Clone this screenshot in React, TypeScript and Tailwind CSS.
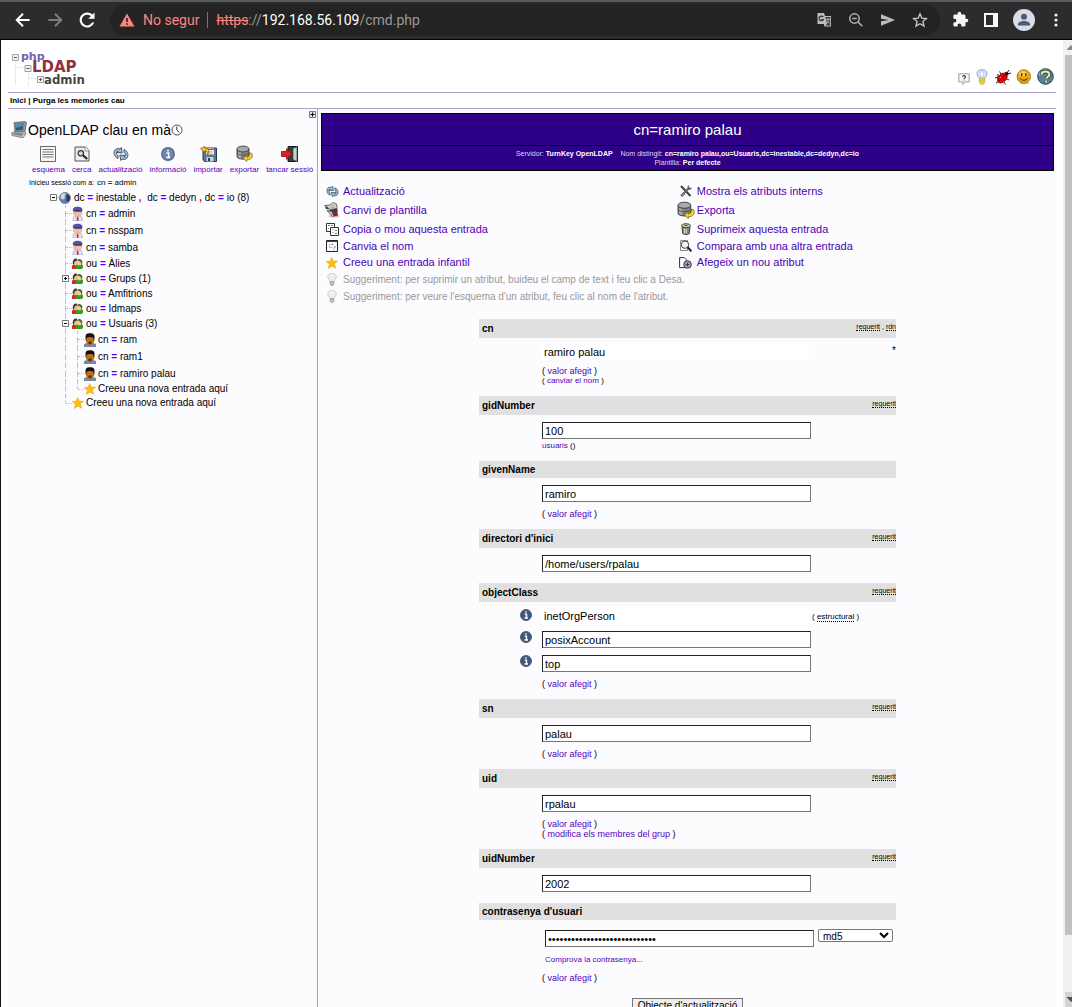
import React, { useState } from "react";

type IconProps = { className?: string };

/* ---------- browser bar icons ---------- */

const BackIcon = () => (
  <svg viewBox="0 0 24 24" className="size-5 text-white" fill="none" stroke="currentColor" strokeWidth="2.4">
    <path d="M20 12H4.5M12 4.500L4.500 12l7.500 7.500" />
  </svg>
);
const ForwardIcon = () => (
  <svg viewBox="0 0 24 24" className="size-5 text-[#7d7d7d]" fill="none" stroke="currentColor" strokeWidth="2.4">
    <path d="M4 12h15.500M12 4.500l7.500 7.500-7.500 7.500" />
  </svg>
);
const ReloadIcon = () => (
  <svg viewBox="0 0 24 24" className="size-5 text-white" fill="currentColor">
    <path d="M18.500 5.500A9 9 0 1 0 20.700 15h-2.800a6.400 6.400 0 1 1-1.300-7.600L13.500 10.500H21V3z" />
  </svg>
);
const WarningIcon = () => (
  <svg viewBox="0 0 16 14" className="h-[14px] w-4">
    <path d="M8 0.500L15.500 13.500H0.500z" fill="#ff8380" />
    <path d="M7.200 5h1.600v4H7.200zM7.200 10.200h1.600v1.600H7.200z" fill="#232323" />
  </svg>
);
const TranslateIcon = () => (
  <svg viewBox="0 0 16 16" className="size-4">
    <path d="M1.500 1H8l1 3h6v10.500H8.500L7.700 12H1.500z" fill="#bdbdbd" />
    <path d="M9.300 5h4.900v8.600H9.200L11 12z" fill="#3a3a3a" />
    <path d="M7.300 5.200A2.300 2.300 0 1 0 7.400 7.500H5.300" fill="none" stroke="#2b2b2b" strokeWidth="1.100" />
    <path d="M9.800 7.300h4M11.800 6.300v1M13 7.500c-.4 1.800-1.500 3-2.600 3.900M10.700 8.800c.6 1.200 1.600 2 2.700 2.500" fill="none" stroke="#cfcfcf" strokeWidth=".8" />
  </svg>
);
const ZoomOutIcon = () => (
  <svg viewBox="0 0 16 16" className="size-4" fill="none" stroke="#b5b5b5" strokeWidth="1.500">
    <circle cx="6.500" cy="6.500" r="4.700" />
    <path d="M4.300 6.500h4.400M10 10l4.300 4.300" />
  </svg>
);
const SendIcon = () => (
  <svg viewBox="0 0 16 16" className="size-4">
    <path d="M1 2.200L15 8 1 13.800V9.300L9 8 1 6.700z" fill="#bdbdbd" />
  </svg>
);
const StarOutlineIcon = () => (
  <svg viewBox="0 0 16 16" className="size-4">
    <path d="M8 1.800l1.800 4.300 4.600.4-3.500 3 1.100 4.600L8 11.700l-4 2.400 1.100-4.600-3.500-3 4.600-.4z" fill="none" stroke="#c8c8c8" strokeWidth="1.300" />
  </svg>
);
const PuzzleIcon = () => (
  <svg viewBox="0 0 24 24" className="size-[17px]">
    <path d="M20.500 11H19V7a2 2 0 0 0-2-2h-4V3.500a2.500 2.500 0 0 0-5 0V5H4a2 2 0 0 0-2 2v3.800h1.500a2.700 2.700 0 0 1 0 5.400H2V20a2 2 0 0 0 2 2h3.800v-1.500a2.700 2.700 0 0 1 5.400 0V22H17a2 2 0 0 0 2-2v-4h1.500a2.500 2.500 0 0 0 0-5z" fill="#f7f7f7" />
  </svg>
);
const SidePanelIcon = () => (
  <svg viewBox="0 0 14 14" className="size-[14px]">
    <path d="M0 0h14v14H0zM2 2v10h7V2z" fill="#f7f7f7" fillRule="evenodd" />
  </svg>
);
const AvatarIcon = () => (
  <svg viewBox="0 0 22 22" className="size-[22px]">
    <circle cx="11" cy="11" r="11" fill="#dadce6" />
    <circle cx="11" cy="7.700" r="3" fill="#4d5a78" />
    <path d="M5 16.500v-1.300c0-2.200 3.600-3.200 6-3.200s6 1 6 3.200v1.300z" fill="#4d5a78" />
  </svg>
);
const MenuDotsIcon = () => (
  <svg viewBox="0 0 4 14" className="h-[14px] w-1" fill="#f2f2f2">
    <circle cx="2" cy="2" r="1.600" />
    <circle cx="2" cy="7" r="1.600" />
    <circle cx="2" cy="12" r="1.600" />
  </svg>
);

/* ---------- page icons ---------- */

const HintBubbleIcon = () => (
  <svg viewBox="0 0 12 12" className="size-3">
    <path d="M.8.800h10.400v8H7L5 11.500 4.700 8.800H.8z" fill="#fafafa" stroke="#9a9a9a" />
    <path d="M4.600 3.700c0-1.500 2.900-1.500 2.900.1 0 .9-1.400.9-1.400 1.900M6.100 6.500v1" fill="none" stroke="#333" strokeWidth="1.100" />
  </svg>
);
const LampIcon = () => (
  <svg viewBox="0 0 12 16" className="h-4 w-3">
    <path d="M3.500 10C3.200 8 1 7 1 4.500 1 2 3 .7 6 .7s5 1.300 5 3.800C11 7 8.800 8 8.500 10z" fill="#dfe6fb" stroke="#8c9ddd" />
    <path d="M4 3.500c1-1 3-1 4 0L7.200 8H4.800z" fill="#fff" stroke="#9ca8d8" strokeWidth=".6" />
    <path d="M3.300 9.300h5.400v4.200L7.500 15.300h-3l-1.200-1.800z" fill="#f1e04a" stroke="#a79a3a" strokeWidth=".6" />
    <path d="M3.500 11h5M3.500 12.800h5" stroke="#b6a53a" strokeWidth=".6" />
  </svg>
);
const BugIcon = () => (
  <svg viewBox="0 0 16 16" className="size-4">
    <path d="M0 9l3-1M1 14l3.500-2M9 13l1.500 2.500M11 9.500l3 1.500M6 5L4.500 2.500M12 4l2-3M13 5l3-1M3 8V5" stroke="#222" strokeWidth="1" />
    <ellipse cx="7.300" cy="9" rx="5.800" ry="4" transform="rotate(-45 7.300 9)" fill="#e0060f" stroke="#700" strokeWidth=".7" />
    <path d="M3.600 12.500L10 6" stroke="#500" strokeWidth=".8" />
    <circle cx="11.700" cy="4.600" r="1.800" fill="#3b090b" />
    <circle cx="5.500" cy="8.500" r=".8" fill="#ff8a7c" />
    <circle cx="8.800" cy="10" r=".7" fill="#400" />
  </svg>
);
const SmileIcon = () => (
  <svg viewBox="0 0 16 16" className="size-4">
    <ellipse cx="8.500" cy="14" rx="5" ry="1.200" fill="#ccc" />
    <circle cx="7.800" cy="7.500" r="6.700" fill="#e7a912" stroke="#8f6205" strokeWidth=".8" />
    <ellipse cx="7" cy="4.500" rx="4" ry="2.500" fill="#f8d04d" />
    <path d="M5.700 4v3M9.800 4v3" stroke="#3a2600" strokeWidth="1.200" />
    <path d="M4 9.200c1.200 2.700 6.400 2.700 7.600 0" fill="none" stroke="#3a2600" strokeWidth="1" />
  </svg>
);
const HelpIcon = () => (
  <svg viewBox="0 0 17 17" className="size-[17px]">
    <circle cx="8.500" cy="8.500" r="7.800" fill="#56809b" stroke="#24465e" />
    <path d="M2 8a6.500 6.500 0 0 1 12-3.500C9 3 5 5 2 8z" fill="#a9c7d6" />
    <path d="M4.700 6.500c0-4.200 8-4 7.600.3-.2 2-2.900 2-2.900 4M9.300 12.500v2.300" fill="none" stroke="#2e3a20" strokeWidth="3.400" />
    <path d="M4.700 6.500c0-4.200 8-4 7.600.3-.2 2-2.900 2-2.900 4M9.300 12.500v2.300" fill="none" stroke="#f1edad" strokeWidth="2" />
  </svg>
);
const ComputerIcon = () => (
  <svg viewBox="0 0 16 18" className="h-[18px] w-4">
    <path d="M3 1.500L14 .5l1.500 1-1.500 9L4 11z" fill="#8d9499" stroke="#555c61" strokeWidth=".7" />
    <path d="M4.700 2.800l8-.8-1 7-7 .5z" fill="#2d5d80" />
    <path d="M4.700 2.800l8-.8-.4 2.800L4.800 7z" fill="#5c8db0" />
    <path d="M.6 12L4 10.500l10 .3 1 2-3 4L1 14.500z" fill="#b9bec0" stroke="#60666a" strokeWidth=".7" />
    <path d="M2 12.700l9 1.700M4 11.700l8 1.200" stroke="#555" strokeWidth=".7" />
  </svg>
);
const ClockIcon = () => (
  <svg viewBox="0 0 12 12" className="size-3">
    <circle cx="6" cy="6" r="5" fill="#fff" stroke="#555" />
    <path d="M5.800 2.500V6l2.500 2.300" fill="none" stroke="#333" />
  </svg>
);
const SchemaIcon = () => (
  <svg viewBox="0 0 16 16" className="size-4">
    <path d="M.5.500h15v15H.5z" fill="#f6f6f4" stroke="#666" />
    <path d="M2.500 3.500h11M2.500 6h11M2.500 8.500h11M2.500 11h11" stroke="#6d7675" strokeWidth="1.200" />
  </svg>
);
const SearchDocIcon = () => (
  <svg viewBox="0 0 16 16" className="size-4">
    <path d="M1 1h10.500L15 4.500V15H1z" fill="#eeeeec" stroke="#555" />
    <path d="M11 1v4h4" fill="#fff" stroke="#777" strokeWidth=".8" />
    <path d="M8.700 9l4.500 4" stroke="#222" strokeWidth="2.200" />
    <circle cx="6.800" cy="7.300" r="2.700" fill="#cfdcdf" stroke="#333" strokeWidth="1.200" />
  </svg>
);
const RefreshIcon = ({ className = "size-4" }: IconProps) => (
  <svg viewBox="0 0 16 16" className={className}>
    <path d="M5 12.500C1.500 11 .8 8 1.300 5.500 2 3 4.500 2 7 3l1.200-1.500 1 5.500-5.200-.6 1.300-1.300c-2-.2-2.300 3-.3 4.700z" fill="#a9c0d6" stroke="#2f4458" strokeWidth=".9" />
    <path d="M11 3.500c3.500 1.500 4.200 4.500 3.700 7-.7 2.500-3.200 3.500-5.700 2.500l-1.200 1.500-1-5.500 5.200.6-1.300 1.300c2 .2 2.300-3 .3-4.700z" fill="#a9c0d6" stroke="#2f4458" strokeWidth=".9" />
  </svg>
);
const InfoIcon = ({ className = "size-[14px]" }: IconProps) => (
  <svg viewBox="0 0 14 14" className={className}>
    <circle cx="7" cy="7" r="6.300" fill="#6c87b4" stroke="#56647a" strokeWidth="1.200" />
    <path d="M7 2.700v1.800M5.500 6H7.700v4M5.300 10.400h3.900" stroke="#fff" strokeWidth="1.500" fill="none" />
  </svg>
);
const DarkInfoIcon = () => (
  <svg viewBox="0 0 12 12" className="size-3">
    <circle cx="6" cy="6" r="5.500" fill="#3c5682" stroke="#59636f" />
    <path d="M6 2.300v1.500M4.700 5.200h1.800v3.300M4.500 9h3.500" stroke="#fff" strokeWidth="1.400" fill="none" />
  </svg>
);
const ImportIcon = () => (
  <svg viewBox="0 0 17 16" className="h-4 w-[17px]">
    <path d="M3 2h13.500v13.500H4.500L3 14z" fill="#5d7694" stroke="#293b50" />
    <path d="M6 2h8v6.500H6z" fill="#f4f2ef" />
    <path d="M6 3.200h8" stroke="#cf4f44" strokeWidth="1.600" />
    <path d="M7.500 5.300h5M7.500 7h5" stroke="#999" strokeWidth=".7" />
    <path d="M6.500 11h7v4.500h-7z" fill="#cbd3d8" />
    <path d="M8 12h2v3H8z" fill="#293b50" />
    <path d="M.5 2.500L4.500.5 4.700 2c4 .2 5 3.500 2.800 6.800.2-2.800-.8-4-2.800-4L5 7z" fill="#f6c93d" stroke="#7c5b05" strokeWidth=".7" />
  </svg>
);
const ExportIcon = ({ className = "size-[17px]" }: IconProps) => (
  <svg viewBox="0 0 17 17" className={className}>
    <path d="M1 4v7.500c0 3.500 12 3.500 12 0V4z" fill="#7c7f7d" stroke="#3d3f3e" strokeWidth=".9" />
    <path d="M2 6.500v5.500c1 1 2 1.300 3 1.500V7.500z" fill="#a5a8a6" />
    <ellipse cx="7" cy="4" rx="6" ry="2.900" fill="#a9acaa" stroke="#3d3f3e" strokeWidth=".9" />
    <path d="M1 8c1 2.800 11 2.800 12 0" fill="none" stroke="#3d3f3e" strokeWidth=".6" />
    <path d="M13.500 7.500l2.500 1.200c1.200 3.300-1 6.300-5 6l-.3 1.800L7 13.200l3.800-2.700.2 1.700c2-.2 2.800-1.700 2.500-4.700z" fill="#f6d13d" stroke="#7c5b05" strokeWidth=".7" />
  </svg>
);
const LogoutIcon = () => (
  <svg viewBox="0 0 17 16" className="h-4 w-[17px]">
    <path d="M7 .5h9.500v15H7z" fill="#31423f" stroke="#161e1c" />
    <path d="M12 2.500l4-1.700v14.700l-4-2z" fill="#c9cfcb" stroke="#39413e" strokeWidth=".6" />
    <path d="M.5 5.500h5V2.700L11 8l-5.500 5.300v-2.800h-5z" fill="#e32020" stroke="#7a0c0c" strokeWidth=".8" />
  </svg>
);
const GlobeIcon = () => (
  <svg viewBox="0 0 12 12" className="size-3">
    <circle cx="6" cy="6" r="5.500" fill="#607fae" stroke="#687080" strokeWidth=".8" />
    <path d="M2 3C4 .7 6 1 7 1.800L5.500 4 6 6 4 7.800 1.500 6z" fill="#cfd9e4" />
    <path d="M7.500 2.500c2.500 0 3.500 2 3.300 4.500L9 10 7.500 8.500z" fill="#26364f" />
  </svg>
);
const AdminIcon = () => (
  <svg viewBox="0 0 11 15" className="h-[15px] w-[11px]">
    <path d="M.8 15L1.500 11 4.500 9.500h2.300L9.800 11l.6 4z" fill="#e2e4f0" stroke="#9a9db3" strokeWidth=".6" />
    <path d="M5.600 10l1.100 2-.5 3H5l-.5-3z" fill="#d83248" />
    <ellipse cx="5.600" cy="6.500" rx="4.200" ry="3.800" fill="#f2bda6" stroke="#b98777" strokeWidth=".4" />
    <path d="M.9 5C.2 2 2.500.800 5.600.8s5.400 1.200 4.800 3.700L9 5.200H3z" fill="#5a539c" />
    <path d="M2.500 5h7.500" stroke="#2c2564" strokeWidth="1.200" />
  </svg>
);
const GroupIcon = () => (
  <svg viewBox="0 0 12 12" className="size-[11px]">
    <path d="M0 12V8.500l2-2h3l1.500 3V12z" fill="#d92918" />
    <path d="M4 12V8.500l2-2.500h3.500L12 8v2l-1 2z" fill="#3c9a21" />
    <ellipse cx="3.800" cy="5" rx="2.600" ry="3" fill="#e2c0a2" />
    <path d="M.8 6C.5 2 3-.2 5.500 1L5 3 3 3.500 2 7z" fill="#333b2e" />
    <ellipse cx="8" cy="4.800" rx="2.700" ry="3.200" fill="#ead38b" />
    <path d="M5.200 3C6 .5 10.500 0 11.300 4l-.5 4-1.300-3.500-2-1.500z" fill="#5b6336" />
  </svg>
);
const UserIcon = () => (
  <svg viewBox="0 0 12 14" className="h-[14px] w-3">
    <path d="M0 14v-3l3-1h6l3 1v3z" fill="#6f8bb0" />
    <rect x="1.500" y=".3" width="9" height="9" rx="3.500" fill="#17120e" />
    <path d="M2.400 5c2-1.200 5.200-1.200 7.200 0v4.500L7.500 12h-3L2.400 9.500z" fill="#c4700f" />
    <path d="M4.300 9c1-1 2.400-1 3.400 0v1.500L6 11.500 4.300 10.500z" fill="#5a330c" />
  </svg>
);
const GoldStarIcon = () => (
  <svg viewBox="0 0 12 12" className="size-3">
    <path d="M5.700.3l1.700 3.600 4.300.2-3.300 2.800 1.500 4.500-4-2.200-3.600 2.500.9-4.500L0 4.500l4-.4z" fill="#fdbd10" stroke="#e9a300" strokeWidth=".4" />
  </svg>
);
const TemplateIcon = () => (
  <svg viewBox="0 0 16 16" className="size-4">
    <ellipse cx="10" cy="14.300" rx="5.500" ry="1.300" fill="#c4c4c4" />
    <path d="M.5 3.500L6 3 9 .5l3.500 1.500.7 4.500L6 7.500 4 5.500z" fill="#dcdcd8" stroke="#4e4e4a" strokeWidth=".8" />
    <path d="M1 4.500L4 5.500l1.500 2L2 7zM5 8l8-1.500 1 3-6 2z" fill="#3b3b3b" />
    <path d="M3 8.500l5 1 2.500 4-2 1z" fill="#c9c9c4" stroke="#444" strokeWidth=".8" />
    <path d="M8 11l5-2 1.200 4.500-4.200 1z" fill="#951a2e" />
    <path d="M6 4.500l5-1.500M6.500 6l5-1" stroke="#8a8a8a" strokeWidth=".7" />
  </svg>
);
const CopyIcon = () => (
  <svg viewBox="0 0 13 13" className="size-[13px]">
    <path d="M.5.500h8v8h-8z" fill="#fff" stroke="#333" />
    <path d="M4.500 4.500h8v8h-8z" fill="#fff" stroke="#333" />
    <path d="M2 2.500h2M5 2.500h2M2 5.500h1M6.500 6.500h1M9 7.500h2M6.500 9.500h1M9 10.500h2" stroke="#777" />
  </svg>
);
const RenameIcon = () => (
  <svg viewBox="0 0 12 12" className="size-3">
    <path d="M.5.500h11v11H.5z" fill="#fafafa" stroke="#223" />
    <path d="M1 1.500h10" stroke="#2c5268" />
    <path d="M3.500 4v3.500h3M7 9h2" fill="none" stroke="#aaa" strokeWidth=".8" />
    <path d="M5.500 4.500h1.500" stroke="#b83d34" />
    <path d="M8 7h1.500" stroke="#27744d" />
  </svg>
);
const BulbIcon = () => (
  <svg viewBox="0 0 10 13" className="h-[13px] w-[10px]">
    <path d="M3 8.500C2.800 7 .8 6 .8 3.800.8 1.800 2.700.5 5 .5s4.200 1.300 4.200 3.300C9.200 6 7.200 7 7 8.500z" fill="#eee" stroke="#c8c8c8" />
    <path d="M3.500 3c.4-.8 1.200-1.200 2-1" stroke="#fff" fill="none" strokeWidth="1.300" />
    <path d="M3.200 8.500h3.600v2.800L5.700 12.500H4.300l-1.100-1.200z" fill="#c1c1aa" stroke="#8b8b80" strokeWidth=".6" />
  </svg>
);
const ToolsIcon = () => (
  <svg viewBox="0 0 12 12" className="size-3">
    <path d="M1 1l9.500 10" stroke="#3d3d3d" strokeWidth="2" />
    <path d="M9.500 2.500L3 9" stroke="#5c6670" strokeWidth="2" />
    <path d="M8.500.700L8 3l1.500 1.200L11.500 3" stroke="#4a5158" strokeWidth="1.200" fill="none" />
    <path d="M3.500 7.500L.8 10l1 1.500L5 9z" stroke="#4a6178" fill="#8aa2b8" />
  </svg>
);
const TrashIcon = () => (
  <svg viewBox="0 0 10 12" className="h-3 w-[10px]">
    <path d="M1 3.500h8l-.7 7c-1 1.200-5.600 1.200-6.600 0z" fill="#858b75" stroke="#33372c" strokeWidth=".9" />
    <path d="M3.500 5.500v5M5.300 5.500v5" stroke="#dfe4d0" strokeWidth=".9" />
    <ellipse cx="5" cy="2.700" rx="4.500" ry="2" fill="#c7ccb8" stroke="#33372c" strokeWidth=".9" />
    <path d="M3.500 2.400h3" stroke="#33372c" strokeWidth=".9" />
  </svg>
);
const CompareIcon = () => (
  <svg viewBox="0 0 12 12" className="size-3">
    <path d="M.6.600h6.900v9.900H.6z" fill="#fff" stroke="#777" strokeWidth=".9" />
    <circle cx="5" cy="4.700" r="3.700" fill="#eef3f5" stroke="#444" />
    <path d="M7.500 7l3.800 4.300" stroke="#222" strokeWidth="2" />
  </svg>
);
const AddAttrIcon = () => (
  <svg viewBox="0 0 13 12" className="h-3 w-[13px]">
    <path d="M.6.600h4.700l2 2v8H.6z" fill="#fff" stroke="#333" />
    <circle cx="8.500" cy="7.500" r="3.800" fill="#a79abf" stroke="#3d3350" />
    <path d="M8.500 5.700v3.600M6.700 7.500h3.600" stroke="#3d3350" />
  </svg>
);
const Logo = () => (
  <svg viewBox="0 0 78 37" className="h-[37px] w-[78px]" role="img" aria-label="phpLDAPadmin">
    <path d="M4.500 12v24M17.500 21v15M5 17.500h8M18 28.500h7" stroke="#d4d4d4" strokeDasharray="1 1" fill="none" />
    <path d="M1.500 4.500h6v6h-6zM14 15.500h6v6h-6zM26.500 26.500h6v6h-6z" fill="#f3f3f3" stroke="#999" strokeWidth=".9" />
    <path d="M3 7.500h3M15.500 18.500h3M28 29.500h3M29.500 28v3" stroke="#555" />
    <text x="10" y="10" fontFamily="'DejaVu Sans'" fontWeight="700" fontSize="11" fill="#7463ae">php</text>
    <text x="21" y="22" fontFamily="'DejaVu Sans'" fontWeight="700" fontSize="15" fill="#92303f">LDAP</text>
    <text x="33" y="34" fontFamily="'DejaVu Sans Condensed', 'DejaVu Sans'" fontWeight="700" fontSize="13" fill="#444">admin</text>
  </svg>
);

/* ---------- building blocks ---------- */

const BrowserBar = () => (
  <header className="flex h-10 shrink-0 items-center border-t-2 border-b border-t-[#58595a] border-b-black bg-[#2c2c2c] pr-3 pb-[2px] pl-[13px] font-[Roboto,sans-serif] text-sm">
    <div className="flex items-center gap-3 pr-[13px]">
      <button aria-label="Enrere"><BackIcon /></button>
      <button aria-label="Endavant"><ForwardIcon /></button>
      <button aria-label="Torna a carregar"><ReloadIcon /></button>
    </div>
    <div className="flex h-8 flex-1 items-center rounded-full bg-[#232323] pr-3 pl-[9px]">
      <WarningIcon />
      <span className="ml-2 text-[#ff8380]">No segur</span>
      <span className="mx-2 h-4 w-px bg-[#777]" />
      <span className="flex-1 text-[#9a9a9a]">
        <s className="text-[#ff8380]">https</s>://<span className="text-white">192.168.56.109</span>/cmd.php
      </span>
      <div className="flex items-center gap-4">
        <button aria-label="Tradueix"><TranslateIcon /></button>
        <button aria-label="Zoom"><ZoomOutIcon /></button>
        <button aria-label="Comparteix"><SendIcon /></button>
        <button aria-label="Preferit"><StarOutlineIcon /></button>
      </div>
    </div>
    <div className="flex items-center gap-[15px] pl-3">
      <button aria-label="Extensions"><PuzzleIcon /></button>
      <button aria-label="Tauler lateral"><SidePanelIcon /></button>
      <button aria-label="Perfil"><AvatarIcon /></button>
      <button aria-label="Menú" className="pr-[2px] pl-1"><MenuDotsIcon /></button>
    </div>
  </header>
);

const tools = [
  { label: "esquema", icon: <SchemaIcon /> },
  { label: "cerca", icon: <SearchDocIcon /> },
  { label: "actualització", icon: <RefreshIcon /> },
  { label: "informació", icon: <InfoIcon /> },
  { label: "importar", icon: <ImportIcon /> },
  { label: "exportar", icon: <ExportIcon /> },
  { label: "tancar sessió", icon: <LogoutIcon /> },
];

const Toggle = ({ open }: { open: boolean }) => (
  <button aria-label={open ? "Contrau" : "Expandeix"} className="block size-[7px] bg-white">
    <svg viewBox="0 0 7 7" className="size-[7px]">
      <path d="M.5.500h6v6h-6z" fill="#fff" stroke="#777" />
      <path d={open ? "M2 3.500h3" : "M2 3.500h3M3.500 2v3"} stroke="#000" />
    </svg>
  </button>
);

const Guide = ({ kind, toggle }: { kind: "pass" | "branch" | "last"; toggle?: "open" | "closed" }) => (
  <span className="flex w-3 shrink-0 self-stretch">
    <span className="flex w-[6px] flex-col">
      <span className="flex-1 border-r border-dashed border-[#c0c0c0]" />
      <span className={kind === "last" ? "flex-1" : "flex-1 border-r border-dashed border-[#c0c0c0]"} />
    </span>
    {kind !== "pass" && (
      <span className="relative flex w-[6px] items-center">
        <span className="w-full border-t border-dotted border-[#c0c0c0]" />
        {toggle && (
          <span className="absolute -left-1">
            <Toggle open={toggle === "open"} />
          </span>
        )}
      </span>
    )}
  </span>
);

const Rdn = ({ attr, value }: { attr: string; value: string }) => (
  <>
    {attr} <b className="text-[#5500ff]">=</b> {value}
  </>
);

type Node = {
  level: 1 | 2;
  kind: "admin" | "group" | "user" | "new";
  name?: string;
  toggle?: "open" | "closed";
  last?: boolean;
};

const nodes: Node[] = [
  { level: 1, kind: "admin", name: "admin" },
  { level: 1, kind: "admin", name: "nsspam" },
  { level: 1, kind: "admin", name: "samba" },
  { level: 1, kind: "group", name: "Àlies" },
  { level: 1, kind: "group", name: "Grups (1)", toggle: "closed" },
  { level: 1, kind: "group", name: "Amfitrions" },
  { level: 1, kind: "group", name: "Idmaps" },
  { level: 1, kind: "group", name: "Usuaris (3)", toggle: "open" },
  { level: 2, kind: "user", name: "ram" },
  { level: 2, kind: "user", name: "ram1" },
  { level: 2, kind: "user", name: "ramiro palau" },
  { level: 2, kind: "new", last: true },
  { level: 1, kind: "new", last: true },
];

const rowHeight = { admin: "h-[17px]", group: "h-[15px]", user: "h-[17px]", new: "h-[14px]" };
const rowIcon = { admin: <AdminIcon />, group: <GroupIcon />, user: <UserIcon />, new: <GoldStarIcon /> };

const TreeRow = ({ node }: { node: Node }) => (
  <li className={`flex items-center ${rowHeight[node.kind]}`}>
    {node.level === 2 && <Guide kind="pass" />}
    <Guide kind={node.last ? "last" : "branch"} toggle={node.toggle} />
    <a href="#" className="flex items-center">
      <span className="w-[14px] shrink-0">{rowIcon[node.kind]}</span>
      <span>
        {node.kind === "new" ? (
          "Creeu una nova entrada aquí"
        ) : (
          <Rdn attr={node.kind === "group" ? "ou" : "cn"} value={node.name ?? ""} />
        )}
      </span>
    </a>
  </li>
);

const Sidebar = () => (
  <aside className="w-[310px] shrink-0 border-r border-[#a6a3d0]">
    <div className="flex justify-end pt-[2px] pr-px">
      <button aria-label="Amplia" className="size-[7px]">
        <svg viewBox="0 0 7 7" className="size-[7px]">
          <path d="M.5.500h6v6h-6z" fill="#d8e6ea" stroke="#778" />
          <path d="M1.500 3.500h4M3.500 1.500v4" stroke="#000" />
        </svg>
      </button>
    </div>
    <h1 className="flex h-6 items-center pl-[3px] text-[14px]">
      <ComputerIcon />
      <span className="ml-px">OpenLDAP clau en mà</span>
      <ClockIcon />
    </h1>
    <nav className="mt-[3px] flex gap-[7px] pl-6">
      {tools.map((tool) => (
        <a key={tool.label} href="#" className="flex flex-col items-center text-[8px] leading-4 whitespace-nowrap text-[#5500bb]">
          <span className="flex h-[17px] items-center">{tool.icon}</span>
          {tool.label}
        </a>
      ))}
    </nav>
    <p className="flex items-baseline gap-[3px] pl-[21px] text-[8px] leading-[10px]">
      <span className="text-[7px]">Inicieu sessió com a:</span>
      <a href="#"><Rdn attr="cn" value="admin" /></a>
    </p>
    <div className="pt-[2px] pl-[42px] text-[10px] leading-[14px]">
      <div className="flex h-[15px] items-center">
        <Toggle open />
        <span className="w-[2px] border-t border-dashed border-[#c0c0c0]" />
        <GlobeIcon />
        <a href="#" className="ml-[3px]">
          <Rdn attr="dc" value="inestable" /> <b className="text-[#e00030]">,</b>&nbsp; <Rdn attr="dc" value="dedyn" />{" "}
          <b className="text-[#e00030]">,</b>&nbsp;<Rdn attr="dc" value="io (8)" />
        </a>
      </div>
      <ul className="pl-[10px]">
        {nodes.map((node, i) => (
          <TreeRow key={i} node={node} />
        ))}
      </ul>
    </div>
  </aside>
);

const actionRows = [
  { height: "h-[18px]", left: ["Actualització", <RefreshIcon className="size-[13px]" />], right: ["Mostra els atributs interns", <ToolsIcon />] },
  { height: "h-5", left: ["Canvi de plantilla", <TemplateIcon />], right: ["Exporta", <ExportIcon className="size-[18px]" />] },
  { height: "h-[18px]", left: ["Copia o mou aquesta entrada", <CopyIcon />], right: ["Suprimeix aquesta entrada", <TrashIcon />] },
  { height: "h-4", left: ["Canvia el nom", <RenameIcon />], right: ["Compara amb una altra entrada", <CompareIcon />] },
  { height: "h-[17px]", left: ["Creeu una entrada infantil", <GoldStarIcon />], right: ["Afegeix un nou atribut", <AddAttrIcon />] },
];

const ActionLink = ({ item }: { item: React.ReactNode[] }) => (
  <a href="#" className="flex items-center text-[#4b00b4]">
    <span className="flex w-[22px] shrink-0 justify-center">{item[1]}</span>
    {item[0]}
  </a>
);

const hints = [
  "Suggeriment: per suprimir un atribut, buideu el camp de text i feu clic a Desa.",
  "Suggeriment: per veure l'esquema d'un atribut, feu clic al nom de l'atribut.",
];

const Badge = ({ children }: { children: React.ReactNode }) => (
  <abbr className="border-b border-dotted border-black no-underline">{children}</abbr>
);

const Section = ({ title, badges = [], children }: { title: string; badges?: string[]; children: React.ReactNode }) => (
  <section>
    <h3 className={`flex justify-between bg-[#e0e0e0] pl-[3px] ${badges.length ? "h-[19px]" : "h-[17px]"}`}>
      <a href="#" className="self-center text-[10px] font-bold">{title}</a>
      <span className="pt-1 text-[7px] leading-[7px] font-normal">
        {badges.map((badge, i) => (
          <React.Fragment key={badge}>
            {i > 0 && " , "}
            <Badge>{badge}</Badge>
          </React.Fragment>
        ))}
      </span>
    </h3>
    <div className="pt-[7px] pb-[10px] pl-[63px]">{children}</div>
  </section>
);

const fieldClass =
  "block h-[17px] w-[269px] border border-[#767676] border-t-[#222] border-l-[#222] bg-white px-[2px] text-[11px] outline-none";

const Field = ({ label, value, type = "text" }: { label: string; value: string; type?: string }) => {
  const [text, setText] = useState(value);
  return <input type={type} aria-label={label} value={text} onChange={(e) => setText(e.target.value)} className={fieldClass} />;
};

const PlainField = ({ label, value }: { label: string; value: string }) => (
  <input readOnly aria-label={label} value={value} className="block h-[15px] w-[267px] bg-white pl-[2px] text-[11px] outline-none" />
);

const ParenLink = ({ children, small }: { children: string; small?: boolean }) => (
  <p className={small ? "text-[8px] leading-[10px]" : "text-[9px] leading-[10px]"}>
    ( <a href="#" className="text-[#5500bb]">{children}</a> )
  </p>
);

const InfoRow = ({ children, className = "h-6" }: { children: React.ReactNode; className?: string }) => (
  <div className={`-ml-[22px] flex items-start ${className}`}>
    <a href="#" aria-label="Informació" className="w-[22px]"><DarkInfoIcon /></a>
    {children}
  </div>
);

const EntryForm = () => (
  <form className="mx-auto mt-[14px] w-[417px]" onSubmit={(e) => e.preventDefault()}>
    <Section title="cn" badges={["requerit", "rdn"]}>
      <div className="mb-[6px] flex justify-between">
        <PlainField label="cn" value="ramiro palau" />
        <span className="text-[10px] leading-[12px]">*</span>
      </div>
      <ParenLink>valor afegit</ParenLink>
      <ParenLink small>canviar el nom</ParenLink>
    </Section>
    <Section title="gidNumber" badges={["requerit"]}>
      <Field label="gidNumber" value="100" />
      <p className="mt-[2px] text-[8px] leading-[10px]">
        <a href="#" className="text-[#5500bb]">usuaris</a> ()
      </p>
    </Section>
    <Section title="givenName">
      <div className="mb-[7px]"><Field label="givenName" value="ramiro" /></div>
      <ParenLink>valor afegit</ParenLink>
    </Section>
    <Section title="directori d'inici" badges={["requerit"]}>
      <div className="mb-px"><Field label="directori d'inici" value="/home/users/rpalau" /></div>
    </Section>
    <Section title="objectClass" badges={["requerit"]}>
      <InfoRow className="h-[22px]">
        <PlainField label="objectClass 1" value="inetOrgPerson" />
        <span className="mt-1 ml-[3px] text-[8px] leading-2">( <Badge>estructural</Badge> )</span>
      </InfoRow>
      <InfoRow><Field label="objectClass 2" value="posixAccount" /></InfoRow>
      <InfoRow><Field label="objectClass 3" value="top" /></InfoRow>
      <ParenLink>valor afegit</ParenLink>
    </Section>
    <Section title="sn" badges={["requerit"]}>
      <div className="mb-[7px]"><Field label="sn" value="palau" /></div>
      <ParenLink>valor afegit</ParenLink>
    </Section>
    <Section title="uid" badges={["requerit"]}>
      <div className="mb-[7px]"><Field label="uid" value="rpalau" /></div>
      <ParenLink>valor afegit</ParenLink>
      <ParenLink>modifica els membres del grup</ParenLink>
    </Section>
    <Section title="uidNumber" badges={["requerit"]}>
      <div className="mb-px"><Field label="uidNumber" value="2002" /></div>
    </Section>
    <Section title="contrasenya d'usuari">
      <div className="flex items-start gap-1 pt-[2px] pl-[3px]">
        <div className="pt-px"><Field type="password" label="contrasenya d'usuari" value="{MD5}0123456789abcdefghijk==" /></div>
        <select aria-label="Xifratge" defaultValue="md5" className="h-[13px] w-[75px] rounded-[2px] border border-[#767676] bg-white text-[10px] leading-[11px]">
          <option>md5</option>
          <option>sha</option>
          <option>ssha</option>
        </select>
      </div>
      <p className="mt-2 mb-2 pl-[3px] text-[8px] leading-[10px]">
        <a href="#" className="text-[#5500bb]">Comprova la contrasenya...</a>
      </p>
      <ParenLink>valor afegit</ParenLink>
    </Section>
    <div className="flex justify-center pt-[5px]">
      <button type="submit" className="border border-[#767676] bg-[#efefef] px-[5px] text-[10px] leading-[14px]">
        Objecte d'actualització
      </button>
    </div>
  </form>
);

export default function App() {
  return (
    <div className="flex h-screen flex-col overflow-hidden bg-white font-['Liberation_Sans',Arial,sans-serif] text-black">
      <BrowserBar />
      <div className="flex min-h-0 flex-1 border-l border-[#111]">
        <div className="min-w-0 flex-1 overflow-hidden pr-[7px] pl-[7px]">
          <div className="flex h-[52px] items-end justify-between">
            <a href="#" className="mb-[5px] ml-[3px]"><Logo /></a>
            <div className="mb-[7px] flex items-center gap-[5px] pr-[2px]">
              <a href="#" aria-label="Suggeriment" className="mt-1 mr-px"><HintBubbleIcon /></a>
              <a href="#" aria-label="Idees" className="mr-[2px]"><LampIcon /></a>
              <a href="#" aria-label="Errors"><BugIcon /></a>
              <a href="#" aria-label="Donatius"><SmileIcon /></a>
              <a href="#" aria-label="Ajuda"><HelpIcon /></a>
            </div>
          </div>
          <nav className="border-y border-[#a6a3d0] pl-[2px] text-[8px] leading-[15px] font-bold">
            <a href="#">Inici</a> | <a href="#">Purga les memòries cau</a>
          </nav>
          <div className="flex min-h-full bg-[#fcfcff]">
            <Sidebar />
            <main className="min-w-0 flex-1 pt-1 pr-[2px] pl-[3px]">
              <div className="border border-black bg-[#2e0088] text-center text-white">
                <h2 className="border-b border-black text-[15px] leading-[31px]">cn=ramiro palau</h2>
                <p className="pt-[3px] pb-[3px] text-[7px] leading-[9px] text-[#dcd6ee]">
                  Servidor: <b className="text-white">TurnKey OpenLDAP</b> &nbsp;&nbsp; Nom distingit:{" "}
                  <b className="text-white">cn=ramiro palau,ou=Usuaris,dc=inestable,dc=dedyn,dc=io</b>
                  <br />
                  Plantilla: <b className="text-white">Per defecte</b>
                </p>
              </div>
              <div className="pt-[11px] text-[11px]">
                {actionRows.map((row, i) => (
                  <div key={i} className={`grid grid-cols-[48%_1fr] items-center gap-x-[2px] ${row.height}`}>
                    <ActionLink item={row.left} />
                    <ActionLink item={row.right} />
                  </div>
                ))}
                {hints.map((hint) => (
                  <p key={hint} className="flex h-[17px] items-center text-[10px] text-[#999]">
                    <span className="flex w-[22px] shrink-0 justify-center"><BulbIcon /></span>
                    {hint}
                  </p>
                ))}
              </div>
              <EntryForm />
            </main>
          </div>
        </div>
        <div className="flex w-[9px] shrink-0 flex-col overflow-hidden bg-[#f1f1f1] pl-[2px]" aria-hidden="true">
          <svg viewBox="0 0 8 15" className="h-[15px] w-2 shrink-0"><path d="M1.500 10L6 5l4.500 5z" fill="#8a8a8a" /></svg>
          <span className="grow-[880] bg-[#c1c1c1]" />
          <span className="grow-[57]" />
          <svg viewBox="0 0 8 15" className="h-[15px] w-2 shrink-0 bg-[#d4d4d4]"><path d="M1.500 5L6 10l4.500-5z" fill="#505050" /></svg>
        </div>
      </div>
    </div>
  );
}
